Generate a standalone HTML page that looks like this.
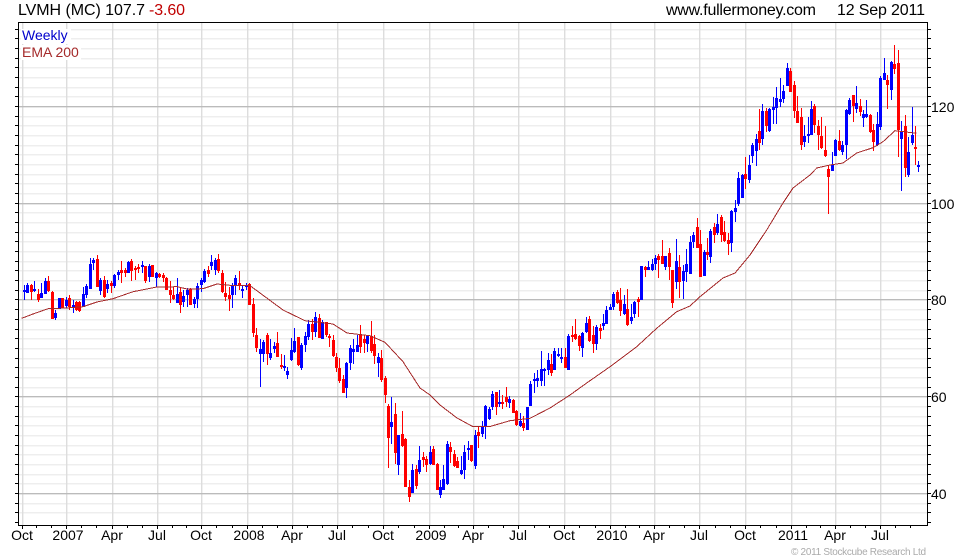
<!DOCTYPE html>
<html><head><meta charset="utf-8"><title>LVMH (MC)</title>
<style>
html,body{margin:0;padding:0;background:#fff;width:980px;height:560px;overflow:hidden}
svg{display:block}
text{font-family:"Liberation Sans",Arial,sans-serif}
</style></head><body>
<svg width="980" height="560" viewBox="0 0 980 560" xmlns="http://www.w3.org/2000/svg">
<g shape-rendering="crispEdges" fill="none">
<g transform="translate(0,1)" opacity=".45"><path stroke="#eee" d="M19 29.5H927M19 38.5H927M19 48.5H927M19 58.5H927M19 67.5H927M19 77.5H927M19 87.5H927M19 96.5H927M19 116.5H927M19 125.5H927M19 135.5H927M19 145.5H927M19 154.5H927M19 164.5H927M19 174.5H927M19 183.5H927M19 193.5H927M19 212.5H927M19 222.5H927M19 232.5H927M19 241.5H927M19 251.5H927M19 261.5H927M19 270.5H927M19 280.5H927M19 290.5H927M19 309.5H927M19 319.5H927M19 329.5H927M19 338.5H927M19 348.5H927M19 358.5H927M19 367.5H927M19 377.5H927M19 387.5H927M19 406.5H927M19 416.5H927M19 425.5H927M19 435.5H927M19 445.5H927M19 454.5H927M19 464.5H927M19 474.5H927M19 483.5H927M19 503.5H927M19 512.5H927"/></g>
<path stroke="#eee" d="M19 29.5H927M19 38.5H927M19 48.5H927M19 58.5H927M19 67.5H927M19 77.5H927M19 87.5H927M19 96.5H927M19 116.5H927M19 125.5H927M19 135.5H927M19 145.5H927M19 154.5H927M19 164.5H927M19 174.5H927M19 183.5H927M19 193.5H927M19 212.5H927M19 222.5H927M19 232.5H927M19 241.5H927M19 251.5H927M19 261.5H927M19 270.5H927M19 280.5H927M19 290.5H927M19 309.5H927M19 319.5H927M19 329.5H927M19 338.5H927M19 348.5H927M19 358.5H927M19 367.5H927M19 377.5H927M19 387.5H927M19 406.5H927M19 416.5H927M19 425.5H927M19 435.5H927M19 445.5H927M19 454.5H927M19 464.5H927M19 474.5H927M19 483.5H927M19 503.5H927M19 512.5H927"/>
<g transform="translate(1,0)" opacity=".4"><path stroke="#ddd" d="M22.5 23V525M66.5 23V525M112.5 23V525M157.5 23V525M201.5 23V525M247.5 23V525M292.5 23V525M337.5 23V525M383.5 23V525M429.5 23V525M473.5 23V525M518.5 23V525M564.5 23V525M610.5 23V525M654.5 23V525M699.5 23V525M745.5 23V525M791.5 23V525M835.5 23V525M880.5 23V525"/></g>
<path stroke="#ddd" d="M22.5 23V525M66.5 23V525M112.5 23V525M157.5 23V525M201.5 23V525M247.5 23V525M292.5 23V525M337.5 23V525M383.5 23V525M429.5 23V525M473.5 23V525M518.5 23V525M564.5 23V525M610.5 23V525M654.5 23V525M699.5 23V525M745.5 23V525M791.5 23V525M835.5 23V525M880.5 23V525"/>
<g transform="translate(0,1)" opacity=".35"><path stroke="#bbb" d="M19 106.5H927M19 203.5H927M19 299.5H927M19 396.5H927M19 493.5H927"/></g>
<path stroke="#bbb" d="M19 106.5H927M19 203.5H927M19 299.5H927M19 396.5H927M19 493.5H927"/>
</g>
<rect x="21" y="29" width="50" height="15" fill="#fff"/>
<rect x="21" y="45" width="60" height="15" fill="#fff"/>
<g shape-rendering="crispEdges" fill="none">
<!-- blue wicks -->
<path stroke="#0000ff" stroke-width="1" d="M24.5 285V300M27.5 283V293M34.5 281V292M41.5 283V298M45.5 278V294M55.5 310V320M59.5 298V309M66.5 297V308M73.5 300V313M83.5 287V307M86.5 284V298M90.5 258V288M93.5 258V270M100.5 278V295M107.5 280V293M114.5 274V288M118.5 270V280M128.5 261V273M142.5 261V273M149.5 264V282M156.5 272V287M177.5 278V303M183.5 290V307M187.5 288V307M194.5 297V308M197.5 283V308M201.5 278V292M204.5 269V283M211.5 255V270M215.5 258V275M232.5 283V308M235.5 275V295M242.5 286V298M246.5 283V290M260.5 339V387M263.5 340V362M270.5 339V360M274.5 342V353M284.5 355V371M287.5 367V379M291.5 338V361M294.5 328V353M301.5 343V370M305.5 332V352M308.5 320V340M315.5 312V337M322.5 320V339M346.5 362V398M350.5 345V370M353.5 339V364M357.5 335V352M367.5 335V352M378.5 353V377M391.5 397V444M398.5 435V475M412.5 464V493M419.5 446V474M430.5 446V465M440.5 480V498M443.5 465V490M447.5 441V485M461.5 456V475M464.5 445V479M468.5 441V460M475.5 430V469M482.5 421V437M485.5 405V439M489.5 407V420M492.5 391V410M499.5 390V407M509.5 396V408M520.5 413V427M527.5 407V430M530.5 381V406M534.5 373V393M537.5 370V387M541.5 351V386M544.5 368V386M548.5 353V375M554.5 348V370M558.5 348V357M561.5 348V363M568.5 334V370M582.5 332V357M586.5 317V333M596.5 325V350M603.5 314V330M606.5 306V324M610.5 304V310M613.5 292V310M624.5 295V315M631.5 304V324M634.5 301V318M641.5 266V300M648.5 261V270M652.5 259V271M655.5 255V270M665.5 256V270M676.5 239V289M683.5 265V299M686.5 249V282M690.5 236V274M693.5 232V248M704.5 250V276M710.5 229V263M717.5 214V235M731.5 210V252M735.5 200V222M738.5 172V206M742.5 174V198M749.5 155V183M752.5 143V163M756.5 134V166M762.5 104V145M769.5 108V132M773.5 97V124M776.5 87V124M780.5 78V107M783.5 85V103M787.5 63V86M804.5 125V147M808.5 117V143M811.5 101V135M832.5 152V171M835.5 139V156M842.5 141V155M846.5 109V159M849.5 98V115M856.5 86V113M863.5 110V127M866.5 100V118M877.5 112V146M880.5 76V130M884.5 58V80M891.5 61V100M901.5 121V191M908.5 137V177M912.5 107V145M918.5 161V172"/>
<!-- blue bodies -->
<path stroke="#0000ff" stroke-width="3" d="M24.5 290V292M27.5 285V293M34.5 289V291M41.5 293V298M45.5 281V294M55.5 313V318M59.5 298V309M66.5 300V306M73.5 305V307M83.5 294V307M86.5 286V295M90.5 264V289M93.5 260V263M100.5 280V291M107.5 284V289M114.5 275V286M118.5 272V275M128.5 262V273M142.5 265V267M149.5 266V277M156.5 273V278M177.5 294V303M183.5 296V302M187.5 290V295M194.5 299V304M197.5 286V299M201.5 280V285M204.5 271V282M211.5 262V266M215.5 260V270M232.5 286V295M235.5 278V285M242.5 289V291M246.5 285V287M260.5 349V354M263.5 342V354M270.5 353V358M274.5 346V349M284.5 366V368M287.5 371V375M291.5 350V360M294.5 341V352M301.5 345V368M305.5 336V345M308.5 324V337M315.5 317V332M322.5 322V339M346.5 363V388M350.5 348V363M353.5 349V352M357.5 345V352M367.5 335V344M378.5 357V363M391.5 422V427M398.5 435V465M412.5 470V493M419.5 460V472M430.5 452V464M440.5 487V495M443.5 479V490M447.5 444V484M461.5 470V474M464.5 452V470M468.5 448V450M475.5 435V466M482.5 427V434M485.5 406V427M489.5 409V419M492.5 394V407M499.5 402V404M509.5 399V403M520.5 421V426M527.5 407V430M530.5 384V406M534.5 379V381M537.5 378V381M541.5 369V381M544.5 369V371M548.5 360V370M554.5 351V370M558.5 354V356M561.5 357V359M568.5 336V370M582.5 333V348M586.5 323V332M596.5 327V344M603.5 323V326M606.5 310V324M610.5 307V310M613.5 294V307M624.5 304V314M631.5 317V321M634.5 302V314M641.5 266V300M648.5 267V270M652.5 264V270M655.5 258V264M665.5 256V267M676.5 261V282M683.5 271V281M686.5 264V272M690.5 242V274M693.5 235V242M704.5 252V276M710.5 231V257M717.5 224V233M731.5 211V243M735.5 208V212M738.5 178V204M742.5 175V198M749.5 165V180M752.5 145V156M756.5 139V151M762.5 111V139M769.5 109V131M773.5 107V110M776.5 98V108M780.5 99V102M783.5 91V99M787.5 68V86M804.5 136V142M808.5 134V136M811.5 109V135M832.5 165V171M835.5 140V156M842.5 145V152M846.5 110V145M849.5 100V114M856.5 103V109M863.5 114V118M866.5 114V117M877.5 124V145M880.5 78V127M884.5 73V80M891.5 62V90M901.5 132V139M908.5 152V175M912.5 135V143M918.5 165V167"/>
<!-- red wicks -->
<path stroke="#ff0000" stroke-width="1" d="M31.5 284V300M38.5 289V302M48.5 276V292M52.5 291V319M62.5 298V308M69.5 295V310M76.5 301V311M79.5 301V312M97.5 255V287M104.5 276V298M111.5 281V293M121.5 261V283M125.5 268V277M131.5 259V281M135.5 266V280M138.5 264V273M145.5 266V283M152.5 265V277M159.5 273V278M163.5 273V282M166.5 277V290M170.5 281V303M173.5 287V300M180.5 287V313M190.5 288V305M208.5 266V277M218.5 254V273M222.5 270V293M225.5 282V301M229.5 287V311M239.5 271V290M249.5 283V305M253.5 298V337M256.5 328V352M267.5 333V365M277.5 332V357M281.5 354V369M298.5 337V366M312.5 319V340M319.5 314V338M326.5 322V337M329.5 334V347M333.5 335V357M336.5 353V372M339.5 358V383M343.5 375V393M360.5 325V353M364.5 335V353M371.5 321V353M374.5 335V364M381.5 350V382M385.5 376V403M388.5 404V468M395.5 403V464M402.5 411V447M405.5 438V487M409.5 480V502M416.5 465V489M423.5 452V467M426.5 456V472M433.5 446V465M437.5 463V490M450.5 442V463M454.5 450V467M457.5 457V468M471.5 445V462M478.5 427V448M496.5 392V415M502.5 395V409M506.5 387V407M513.5 399V413M516.5 410V426M523.5 416V431M551.5 354V376M565.5 348V368M572.5 326V342M575.5 319V340M579.5 335V351M589.5 316V342M593.5 326V353M600.5 324V339M617.5 290V304M620.5 288V316M627.5 289V326M638.5 297V317M645.5 266V277M658.5 254V278M662.5 240V264M669.5 248V280M672.5 270V308M679.5 255V298M697.5 218V248M700.5 230V277M707.5 238V260M714.5 223V243M721.5 215V242M724.5 221V242M728.5 233V255M745.5 157V189M759.5 109V150M766.5 108V132M790.5 68V92M794.5 81V118M797.5 96V123M801.5 108V150M814.5 104V133M818.5 120V150M821.5 117V149M825.5 126V157M828.5 166V214M839.5 130V151M853.5 95V122M860.5 99V116M870.5 114V133M873.5 124V151M887.5 75V109M894.5 45V74M898.5 50V157M905.5 115V177M915.5 126V165"/>
<!-- red bodies -->
<path stroke="#ff0000" stroke-width="3" d="M31.5 285V292M38.5 294V300M48.5 281V291M52.5 292V319M62.5 298V308M69.5 298V307M76.5 302V310M79.5 302V311M97.5 259V287M104.5 280V297M111.5 283V286M121.5 270V273M125.5 270V273M131.5 261V271M135.5 268V270M138.5 267V269M145.5 266V281M152.5 265V277M159.5 274V277M163.5 275V278M166.5 278V290M170.5 290V295M173.5 295V299M180.5 292V305M190.5 289V305M208.5 270V274M218.5 259V271M222.5 273V292M225.5 293V297M229.5 295V299M239.5 283V286M249.5 284V305M253.5 304V333M256.5 335V348M267.5 335V354M277.5 343V357M281.5 365V367M298.5 337V365M312.5 324V332M319.5 318V338M326.5 322V335M329.5 336V338M333.5 340V356M336.5 357V368M339.5 368V381M343.5 379V393M360.5 335V347M364.5 339V343M371.5 336V351M374.5 344V356M381.5 358V380M385.5 378V395M388.5 406V438M395.5 414V453M402.5 434V446M405.5 439V487M409.5 487V497M416.5 469V486M423.5 457V460M426.5 459V465M433.5 449V465M437.5 464V490M450.5 447V452M454.5 454V466M457.5 461V468M471.5 445V461M478.5 432V436M496.5 392V407M502.5 402V404M506.5 397V402M513.5 400V413M516.5 411V425M523.5 423V428M551.5 364V373M565.5 357V368M572.5 335V337M575.5 334V339M579.5 336V346M589.5 319V341M593.5 335V344M600.5 328V331M617.5 292V303M620.5 300V311M627.5 309V325M638.5 299V302M645.5 267V270M658.5 256V260M662.5 256V264M669.5 253V267M672.5 270V303M679.5 267V282M697.5 227V248M700.5 244V277M707.5 252V255M714.5 227V235M721.5 217V235M724.5 232V241M728.5 240V244M745.5 174V179M759.5 131V143M766.5 111V126M790.5 71V92M794.5 85V111M797.5 111V123M801.5 117V145M814.5 106V125M818.5 126V135M821.5 136V148M825.5 150V156M828.5 169V177M839.5 141V150M853.5 95V106M860.5 106V112M870.5 115V132M873.5 130V142M887.5 80V85M894.5 64V69M898.5 63V130M905.5 126V168M915.5 147V149"/>
</g>
<!-- EMA -->
<polyline fill="none" shape-rendering="crispEdges" stroke="#a52a2a" stroke-width="1" points="21.7,318.3 33,314 48,308.7 66.7,308 83,306.7 97,302 113,298.7 133,291.7 157,287 177,286.7 187,289 203,288.7 217,284 230,285.3 250,285.7 260,293 283,310 305,320.7 333,324 347,333 370,335.7 385,342.3 403,361.7 420,388 430,395 440,405 457,418 473,426.7 490,426.5 510,420.7 530,418.3 550,408 570,395 586.7,383 610,366.7 636.7,346.7 656.7,328.3 676.7,311.7 690,306 700,296.7 723,278 735,273 750,255 766.7,230 783,203 793,188 810,175 816.7,168 830,165 843,163 856.7,153 873,147.7 883,141.7 895,130.7 916.7,133.3"/>
<g shape-rendering="crispEdges" fill="none" stroke="#000">
<rect x="18.5" y="22.5" width="909" height="503"/>
<path d="M15 29.5h3M15 38.5h3M15 48.5h3M15 58.5h3M15 67.5h3M15 77.5h3M15 87.5h3M15 96.5h3M15 106.5h3M15 116.5h3M15 125.5h3M15 135.5h3M15 145.5h3M15 154.5h3M15 164.5h3M15 174.5h3M15 183.5h3M15 193.5h3M15 203.5h3M15 212.5h3M15 222.5h3M15 232.5h3M15 241.5h3M15 251.5h3M15 261.5h3M15 270.5h3M15 280.5h3M15 290.5h3M15 299.5h3M15 309.5h3M15 319.5h3M15 329.5h3M15 338.5h3M15 348.5h3M15 358.5h3M15 367.5h3M15 377.5h3M15 387.5h3M15 396.5h3M15 406.5h3M15 416.5h3M15 425.5h3M15 435.5h3M15 445.5h3M15 454.5h3M15 464.5h3M15 474.5h3M15 483.5h3M15 493.5h3M15 503.5h3M15 512.5h3M15 522.5h3"/>
<path d="M928 29.5h3M928 38.5h3M928 48.5h3M928 58.5h3M928 67.5h3M928 77.5h3M928 87.5h3M928 96.5h3M928 106.5h3M928 116.5h3M928 125.5h3M928 135.5h3M928 145.5h3M928 154.5h3M928 164.5h3M928 174.5h3M928 183.5h3M928 193.5h3M928 203.5h3M928 212.5h3M928 222.5h3M928 232.5h3M928 241.5h3M928 251.5h3M928 261.5h3M928 270.5h3M928 280.5h3M928 290.5h3M928 299.5h3M928 309.5h3M928 319.5h3M928 329.5h3M928 338.5h3M928 348.5h3M928 358.5h3M928 367.5h3M928 377.5h3M928 387.5h3M928 396.5h3M928 406.5h3M928 416.5h3M928 425.5h3M928 435.5h3M928 445.5h3M928 454.5h3M928 464.5h3M928 474.5h3M928 483.5h3M928 493.5h3M928 503.5h3M928 512.5h3M928 522.5h3"/>
<path d="M22.5 526v3M66.5 526v3M112.5 526v3M157.5 526v3M201.5 526v3M247.5 526v3M292.5 526v3M337.5 526v3M383.5 526v3M429.5 526v3M473.5 526v3M518.5 526v3M564.5 526v3M610.5 526v3M654.5 526v3M699.5 526v3M745.5 526v3M791.5 526v3M835.5 526v3M880.5 526v3"/>
<path d="M36.5 526v2M51.5 526v2M81.5 526v2M96.5 526v2M127.5 526v2M142.5 526v2M172.5 526v2M186.5 526v2M216.5 526v2M232.5 526v2M262.5 526v2M277.5 526v2M307.5 526v2M322.5 526v2M352.5 526v2M368.5 526v2M398.5 526v2M414.5 526v2M444.5 526v2M458.5 526v2M488.5 526v2M503.5 526v2M534.5 526v2M549.5 526v2M579.5 526v2M595.5 526v2M625.5 526v2M639.5 526v2M669.5 526v2M684.5 526v2M715.5 526v2M730.5 526v2M760.5 526v2M776.5 526v2M806.5 526v2M820.5 526v2M850.5 526v2M865.5 526v2M895.5 526v2M910.5 526v2"/>
</g>
<text x="18" y="15" font-size="16" fill="#000" textLength="127" lengthAdjust="spacing">LVMH (MC) 107.7</text>
<text x="149" y="15" font-size="16" fill="#c00000" textLength="36" lengthAdjust="spacing">-3.60</text>
<text x="666" y="15" font-size="16" fill="#000" textLength="150" lengthAdjust="spacing">www.fullermoney.com</text>
<text x="837" y="15" font-size="16" fill="#000" textLength="88" lengthAdjust="spacing">12 Sep 2011</text>
<text x="22" y="40" font-size="14" fill="#0000cc">Weekly</text>
<text x="22" y="57" font-size="14" fill="#a52a2a">EMA 200</text>
<g font-size="14" fill="#000">
<text x="931" y="112">120</text><text x="931" y="209">100</text><text x="931" y="305">80</text><text x="931" y="402">60</text><text x="931" y="499">40</text>
</g>
<g font-size="14" fill="#000" text-anchor="middle">
<text x="22" y="540">Oct</text><text x="68" y="540">2007</text><text x="112" y="540">Apr</text><text x="157" y="540">Jul</text><text x="201" y="540">Oct</text><text x="249" y="540">2008</text><text x="292" y="540">Apr</text><text x="337" y="540">Jul</text><text x="383" y="540">Oct</text><text x="431" y="540">2009</text><text x="473" y="540">Apr</text><text x="518" y="540">Jul</text><text x="564" y="540">Oct</text><text x="612" y="540">2010</text><text x="654" y="540">Apr</text><text x="699" y="540">Jul</text><text x="745" y="540">Oct</text><text x="793" y="540">2011</text><text x="835" y="540">Apr</text><text x="880" y="540">Jul</text>
</g>
<text x="791" y="555" font-size="10" fill="#aaa" textLength="135" lengthAdjust="spacing">© 2011 Stockcube Research Ltd</text>
</svg>
</body></html>
